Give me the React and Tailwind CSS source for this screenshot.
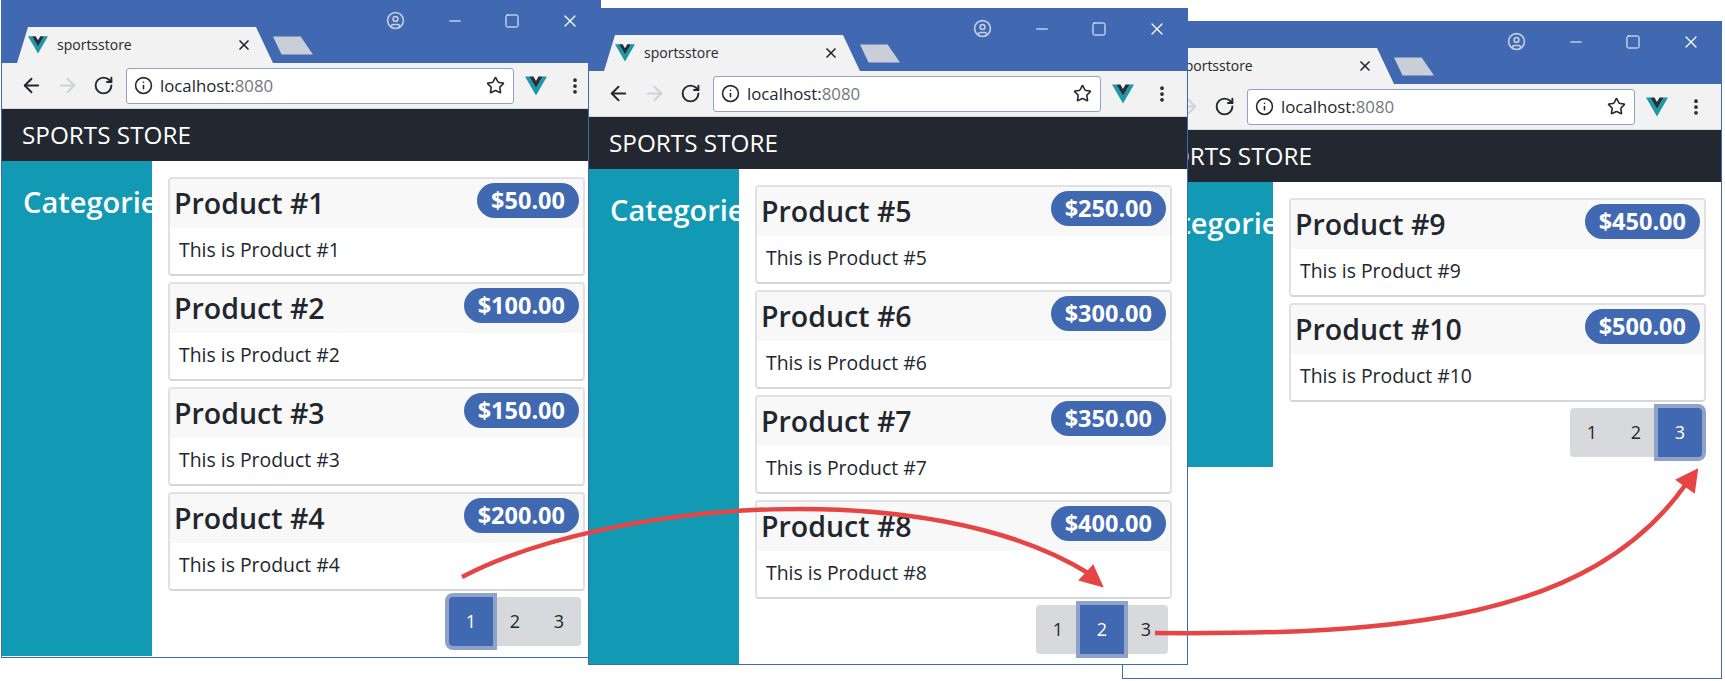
import { ArrowLeft, ArrowRight, RotateCw, Info, Star, X, Minus, Square, EllipsisVertical, CircleUser } from 'lucide-react';

const PAGES = [
  { pos: 'left-[1px] top-[0px] h-[658px] z-10', active: 0, products: [[1, '$50.00'], [2, '$100.00'], [3, '$150.00'], [4, '$200.00']] },
  { pos: 'left-[1122px] top-[21px] h-[658px] z-0', active: 2, products: [[9, '$450.00'], [10, '$500.00']] },
  { pos: 'left-[588px] top-[8px] h-[657px] z-20', active: 1, products: [[5, '$250.00'], [6, '$300.00'], [7, '$350.00'], [8, '$400.00']] },
];

function VueLogo({ className }) {
  return (
    <svg viewBox="0 0 256 221" className={className}>
      <path d="M0 0l128 220.8L256 0h-51.2L128 132.48 50.56 0H0Z" fill="#1a9aa8" />
      <path d="M50.56 0L128 133.12 204.8 0h-47.36L128 51.2 97.92 0H50.56Z" fill="#22303c" />
    </svg>
  );
}

function TitleBar() {
  return (
    <div className="h-[62px] shrink-0 bg-[#4169b2]">
      <div className="h-[26px] flex justify-end items-start pt-[10px] text-white">
        <CircleUser size={19} strokeWidth={2} className="text-[#c5cfe2] mr-[41px]" />
        <Minus size={18} strokeWidth={1.5} className="mr-[40px] mt-[1px]" />
        <Square size={16} strokeWidth={1.5} className="mr-[40px] mt-[2px]" />
        <X size={20} strokeWidth={1.5} className="mr-[20px]" />
      </div>
      <div className="h-[36px] flex items-stretch pl-[9px]">
        <div className="w-[262px] bg-[#f2f2f2] [clip-path:polygon(0_100%,6px_100%,17px_0,245px_0,262px_100%)] flex items-center pl-[17px] pb-[1px]">
          <VueLogo className="w-[20px] h-[18px]" />
          <span className="ml-[9px] text-[14px] text-[#24272d]">sportsstore</span>
          <X size={16} strokeWidth={2.5} className="ml-[104px] text-[#24272d]" />
        </div>
        <svg viewBox="0 0 42 19" className="w-[40px] h-[19px] mt-[9px]">
          <path d="M0 0H29L42 19H9Z" fill="#c9ced8" />
        </svg>
      </div>
    </div>
  );
}

function Toolbar() {
  return (
    <div className="h-[46px] shrink-0 bg-[#f2f2f2] flex items-center border-b border-[#d4d8e0] text-[#24272d]">
      <ArrowLeft size={23} strokeWidth={2} className="ml-[18px]" />
      <ArrowRight size={23} strokeWidth={2} className="ml-[13px] text-[#cdd1d8]" />
      <RotateCw size={21} strokeWidth={2.2} className="ml-[14px]" />
      <div className="ml-[12px] w-[388px] h-[36px] rounded-[3px] bg-white border border-[#8ea3c7] flex items-center">
        <Info size={19} strokeWidth={2} className="ml-[7px]" />
        <span className="ml-[7px] text-[16.8px]">localhost:<span className="text-[#74777d]">8080</span></span>
        <Star size={19} strokeWidth={2} className="ml-auto mr-[8px]" />
      </div>
      <VueLogo className="ml-[11px] w-[22px] h-[20px]" />
      <EllipsisVertical size={20} strokeWidth={2.5} className="ml-[18px]" />
    </div>
  );
}

function ProductCard({ id, price }) {
  return (
    <div className="h-[99px] rounded-[4px] border-2 border-[#e0e1e5] border-b-[#d5d6dc] bg-white overflow-hidden">
      <div className="h-[49px] bg-[#f8f8f8] flex justify-between">
        <h4 className="pl-[4px] text-[28.5px] leading-[48px] font-semibold text-[#22262e]">Product #{id}</h4>
        <span className="mt-[4px] mr-[4px] h-[35px] px-[14px] rounded-full bg-[#4169b2] text-white text-[23.5px] font-bold leading-[35px]">{price}</span>
      </div>
      <p className="pl-[9px] pt-[10px] text-[19.4px] leading-[24px] text-[#22262e]">This is Product #{id}</p>
    </div>
  );
}

function Pagination({ active }) {
  return (
    <div className="mt-[6px] mr-[4px] flex justify-end">
      {[0, 1, 2].map((i) => (
        <button
          key={i}
          className={`w-[44px] h-[49px] text-[18px] first:rounded-l-[4px] last:rounded-r-[4px] ${
            i === active ? 'relative z-10 bg-[#4169b2] text-white shadow-[0_0_0_4px_#8ea3c7]' : 'bg-[#d8d9dd] text-[#22262e]'
          }`}
        >
          {i + 1}
        </button>
      ))}
    </div>
  );
}

function BrowserWindow({ page }) {
  return (
    <div className={`absolute w-[600px] border border-[#4169b2] bg-white flex flex-col ${page.pos}`}>
      <TitleBar />
      <Toolbar />
      <div className="h-[52px] shrink-0 bg-[#23272f] flex items-center pl-[20px] text-[24.3px] text-white">SPORTS STORE</div>
      <div className="flex">
        <div className="w-[150px] shrink-0 bg-[#1299b3] overflow-hidden pl-[21px] pt-[19px]">
          <h3 className="text-[29px] leading-[44px] font-semibold text-white whitespace-nowrap">Categories</h3>
        </div>
        <div className="flex-1 pl-[16px] pr-[15px] pt-[16px] pb-[10px]">
          <div className="flex flex-col gap-[6px]">
            {page.products.map(([id, price]) => (
              <ProductCard key={id} id={id} price={price} />
            ))}
          </div>
          <Pagination active={page.active} />
        </div>
      </div>
    </div>
  );
}

export default function App() {
  return (
    <div className="relative w-[1725px] h-[681px] bg-white overflow-hidden font-['Open_Sans',sans-serif]">
      {PAGES.map((page) => (
        <BrowserWindow key={page.active} page={page} />
      ))}

      {/* arrows between the pages */}
      <svg viewBox="0 0 1725 681" className="absolute inset-0 z-30 w-[1725px] h-[681px] pointer-events-none">
        <path d="M462 577C610 500 930 475 1088 573" fill="none" stroke="#e54545" strokeWidth="4.5" />
        <path d="M1102 586L1080 580L1093 566Z" fill="#e54545" stroke="#e54545" strokeWidth="2" />
        <path d="M1155 633C1400 635 1590 620 1686 484" fill="none" stroke="#e54545" strokeWidth="4.5" />
        <path d="M1697 470L1677 480L1694 492Z" fill="#e54545" stroke="#e54545" strokeWidth="2" />
      </svg>
    </div>
  );
}
